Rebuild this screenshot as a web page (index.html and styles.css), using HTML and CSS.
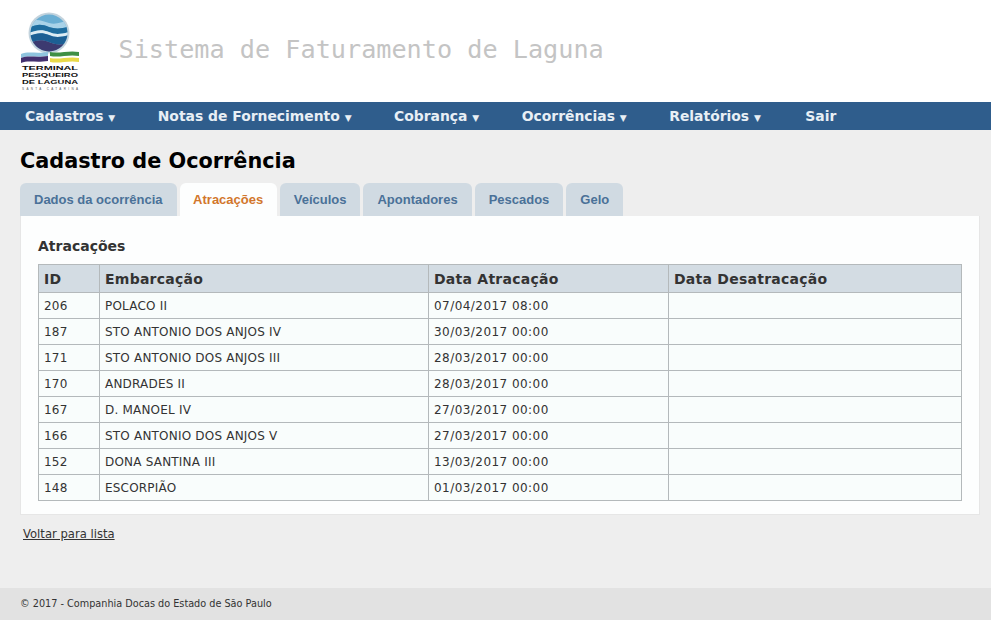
FILE: index.html
```html
<!DOCTYPE html>
<html lang="pt-br">
<head>
    <meta charset="UTF-8">
    <meta name="viewport" content="width=device-width, initial-scale=1.0">
    <title>Cadastro de Ocorrência</title>
    <link rel="stylesheet" href="styles.css">
</head>
<body>

    <header class="topo">
        <svg class="logo" width="60" height="80" viewBox="0 0 60 80" role="img" aria-label="Terminal Pesqueiro de Laguna">
            <defs>
                <clipPath id="circulo"><circle cx="29" cy="21" r="18.5"></circle></clipPath>
            </defs>
            <circle cx="29" cy="21" r="20.5" fill="#c3d3dd"></circle>
            <g clip-path="url(#circulo)">
                <rect x="9" y="0" width="40" height="42" fill="#6aaed3"></rect>
                <path d="M9 10 C16 6 22 9 29 11 C36 13 42 10 49 8 V14 C42 17 35 17 29 15 C22 12 16 12 9 16 Z" fill="#a9d2e8"></path>
                <path d="M9 16 C16 12 22 12 29 15 C35 17 42 17 49 14 V20 C42 22 35 23 29 20 C22 17 16 18 9 21 Z" fill="#1f6d9f"></path>
                <path d="M9 21 C16 18 22 17 29 20 C35 23 42 22 49 20 V23 C42 25 35 26 29 23 C22 20 16 21 9 24 Z" fill="#dcebf3"></path>
                <path d="M9 24 C16 21 22 20 29 23 C35 26 42 25 49 23 V31 C42 33 35 33 29 30 C22 27 16 28 9 31 Z" fill="#1c5f94"></path>
                <path d="M9 31 C16 28 22 27 29 30 C35 33 42 33 49 31 V42 H9 Z" fill="#3c3a70"></path>
            </g>
            <path d="M1 42 C8 39 16 42 28 40 V44 C16 46 8 43 1 46 Z" fill="#8fc4de"></path>
            <path d="M1 46 C8 43 16 46 28 44 V49 C16 51 8 48 1 51 Z" fill="#43306f"></path>
            <path d="M30 40 C40 42 48 38 59 40 V44 C48 42 40 46 30 44 Z" fill="#3f8f45"></path>
            <path d="M30 46 C40 48 48 44 59 46 V50 C48 48 40 52 30 50 Z" fill="#e8d94a"></path>
            <text class="logo-nome" x="2" y="58" textLength="56" lengthAdjust="spacingAndGlyphs">TERMINAL</text>
            <text class="logo-nome" x="2" y="65" textLength="56" lengthAdjust="spacingAndGlyphs">PESQUEIRO</text>
            <text class="logo-nome" x="2" y="72" textLength="56" lengthAdjust="spacingAndGlyphs">DE LAGUNA</text>
            <text class="logo-estado" x="2" y="78" textLength="56">SANTA CATARINA</text>
        </svg>
        <span class="sistema">Sistema de Faturamento de Laguna</span>
    </header>

    <nav class="menu">
        <a href="#">Cadastros <span class="seta">▼</span></a>
        <a href="#">Notas de Fornecimento <span class="seta">▼</span></a>
        <a href="#">Cobrança <span class="seta">▼</span></a>
        <a href="#">Ocorrências <span class="seta">▼</span></a>
        <a href="#">Relatórios <span class="seta">▼</span></a>
        <a class="sair" href="#">Sair</a>
    </nav>

    <main class="conteudo">
        <h1>Cadastro de Ocorrência</h1>

        <ul class="abas">
            <li><a href="#">Dados da ocorrência</a></li>
            <li class="ativa"><a href="#">Atracações</a></li>
            <li><a href="#">Veículos</a></li>
            <li><a href="#">Apontadores</a></li>
            <li><a href="#">Pescados</a></li>
            <li><a href="#">Gelo</a></li>
        </ul>

        <section class="painel">
            <h2>Atracações</h2>
            <table>
                <thead>
                    <tr>
                        <th class="col-id">ID</th>
                        <th class="col-emb">Embarcação</th>
                        <th class="col-data">Data Atracação</th>
                        <th>Data Desatracação</th>
                    </tr>
                </thead>
                <tbody>
                    <tr><td>206</td><td>POLACO II</td><td>07/04/2017 08:00</td><td></td></tr>
                    <tr><td>187</td><td>STO ANTONIO DOS ANJOS IV</td><td>30/03/2017 00:00</td><td></td></tr>
                    <tr><td>171</td><td>STO ANTONIO DOS ANJOS III</td><td>28/03/2017 00:00</td><td></td></tr>
                    <tr><td>170</td><td>ANDRADES II</td><td>28/03/2017 00:00</td><td></td></tr>
                    <tr><td>167</td><td>D. MANOEL IV</td><td>27/03/2017 00:00</td><td></td></tr>
                    <tr><td>166</td><td>STO ANTONIO DOS ANJOS V</td><td>27/03/2017 00:00</td><td></td></tr>
                    <tr><td>152</td><td>DONA SANTINA III</td><td>13/03/2017 00:00</td><td></td></tr>
                    <tr><td>148</td><td>ESCORPIÃO</td><td>01/03/2017 00:00</td><td></td></tr>
                </tbody>
            </table>
        </section>

        <a class="voltar" href="#">Voltar para lista</a>
    </main>

    <footer class="rodape">© 2017 - Companhia Docas do Estado de São Paulo</footer>

</body>
</html>
```

FILE: styles.css
```css
html, body {
    height: 100%;
}
body {
    margin: 0;
    display: flex;
    flex-direction: column;
    min-height: 620px;
    box-sizing: border-box;
    font-family: "DejaVu Sans", Verdana, sans-serif;
    font-size: 12px;
    color: #333;
    background-color: #eeeeee;
}
.topo {
    height: 102px;
    display: flex;
    align-items: center;
    padding-left: 20px;
    background-color: white;
    box-sizing: border-box;
}
.logo {
    margin-top: 2px;
    flex-shrink: 0;
}
.logo-nome {
    font-family: "Liberation Sans", Arial, sans-serif;
    font-size: 6px;
    font-weight: bold;
    fill: #111;
}
.logo-estado {
    font-family: "Liberation Sans", Arial, sans-serif;
    font-size: 3px;
    fill: #555;
}
.sistema {
    margin-left: 38.5px;
    margin-top: -4px;
    font-family: "DejaVu Sans Mono", Consolas, monospace;
    font-size: 25.2px;
    color: #c4c4c4;
    white-space: nowrap;
}
.menu {
    height: 28px;
    display: flex;
    align-items: center;
    padding-left: 25px;
    gap: 42.5px;
    background-color: #2f5d8c;
}
.menu a {
    font-size: 13.9px;
    font-weight: bold;
    color: #e8eff5;
    text-decoration: none;
    white-space: nowrap;
}
.menu .sair {
    margin-left: 2px;
}
.seta {
    font-size: 9px;
}
.conteudo {
    flex: 1;
    padding: 0 11px 0 20px;
}
h1 {
    margin: 19px 0 9px;
    font-size: 20.8px;
    line-height: 25px;
    color: #000;
}
.abas {
    display: flex;
    gap: 3px;
    margin: 0;
    padding: 0;
    list-style: none;
}
.abas li {
    background-color: #d0dae2;
    border-radius: 6px 6px 0 0;
}
.abas li.ativa {
    background-color: #fdfefe;
}
.abas a {
    display: block;
    height: 33px;
    padding: 0 14px;
    font-family: "Liberation Sans", Arial, sans-serif;
    font-size: 13px;
    font-weight: bold;
    line-height: 33px;
    color: #4a7198;
    text-decoration: none;
}
.abas .ativa a {
    padding: 0 13.5px;
    color: #d2762c;
}
.painel {
    padding: 21px 17px 13px;
    background-color: #fdfefe;
    border: 1px solid #e6e6e6;
    border-top: 0;
}
h2 {
    margin: 0 0 8px;
    font-size: 14px;
    line-height: 19px;
    font-weight: bold;
}
table {
    width: 924px;
    border-collapse: collapse;
    table-layout: fixed;
}
th, td {
    padding: 0 5px;
    border: 1px solid #b4b9bb;
    text-align: left;
}
th {
    height: 27px;
    font-size: 14px;
    letter-spacing: 0.25px;
    background-color: #d3dce3;
}
td {
    height: 25px;
    letter-spacing: 0.2px;
    background-color: #f9fdfc;
}
td:nth-child(3) {
    letter-spacing: 0.45px;
}
.col-id {
    width: 50px;
}
.col-emb {
    width: 318px;
}
.col-data {
    width: 229px;
}
.voltar {
    display: inline-block;
    margin: 12px 0 0 3px;
    font-size: 11.6px;
    color: #333;
}
.rodape {
    height: 32px;
    padding-left: 20px;
    line-height: 32px;
    font-size: 9.7px;
    background-color: #e2e2e2;
}
```
